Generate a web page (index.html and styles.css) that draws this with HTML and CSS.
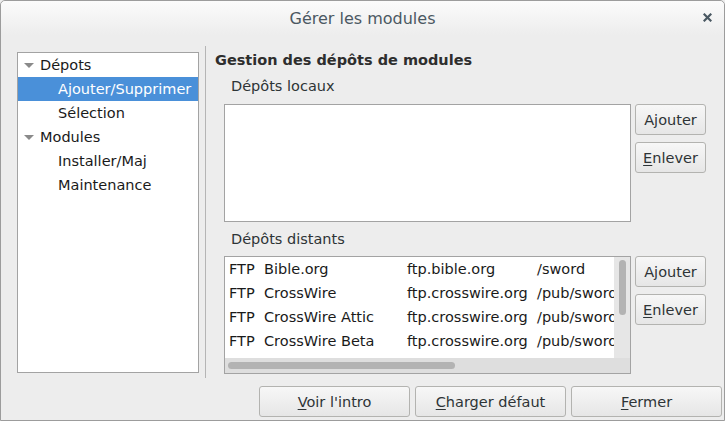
FILE: index.html
```html
<!DOCTYPE html>
<html lang="fr">
<head>
<meta charset="utf-8">
<title>Gérer les modules</title>
<link rel="stylesheet" href="styles.css">
</head>
<body>
<div class="window">
  <header class="titlebar">
    <span class="title">Gérer les modules</span>
    <span class="close" aria-label="Fermer">
      <svg width="9" height="9" viewBox="0 0 9 9"><path d="M1.5 1.5 L7.5 7.5 M7.5 1.5 L1.5 7.5" stroke="#4a5862" stroke-width="2.2" stroke-linecap="square"/></svg>
    </span>
  </header>
  <div class="main">
    <div class="tree">
      <div class="row parent"><span class="expander"></span>Dépots</div>
      <div class="row child selected">Ajouter/Supprimer</div>
      <div class="row child">Sélection</div>
      <div class="row parent"><span class="expander"></span>Modules</div>
      <div class="row child">Installer/Maj</div>
      <div class="row child">Maintenance</div>
    </div>
    <div class="separator"></div>
    <div class="panel">
      <h1 class="heading">Gestion des dépôts de modules</h1>
      <div class="label">Dépôts locaux</div>
      <div class="section">
        <div class="listbox"></div>
        <div class="side-buttons">
          <button class="btn small">Ajouter</button>
          <button class="btn small"><u>E</u>nlever</button>
        </div>
      </div>
      <div class="label second">Dépôts distants</div>
      <div class="section">
        <div class="listbox remote">
          <div class="rows">
            <div class="rrow"><span class="c1">FTP</span><span class="c2">Bible.org</span><span class="c3">ftp.bible.org</span><span class="c4">/sword</span></div>
            <div class="rrow"><span class="c1">FTP</span><span class="c2">CrossWire</span><span class="c3">ftp.crosswire.org</span><span class="c4">/pub/sword</span></div>
            <div class="rrow"><span class="c1">FTP</span><span class="c2">CrossWire Attic</span><span class="c3">ftp.crosswire.org</span><span class="c4">/pub/sword</span></div>
            <div class="rrow"><span class="c1">FTP</span><span class="c2">CrossWire Beta</span><span class="c3">ftp.crosswire.org</span><span class="c4">/pub/sword</span></div>
          </div>
          <div class="vscroll"><div class="vthumb"></div></div>
          <div class="hscroll"><div class="hthumb"></div></div>
        </div>
        <div class="side-buttons">
          <button class="btn small">Ajouter</button>
          <button class="btn small"><u>E</u>nlever</button>
        </div>
      </div>
    </div>
  </div>
  <div class="footer">
    <button class="btn wide"><u>V</u>oir l'intro</button>
    <button class="btn wide"><u>C</u>harger défaut</button>
    <button class="btn wide"><u>F</u>ermer</button>
  </div>
</div>
</body>
</html>
```

FILE: styles.css
```css
html, body {
  margin: 0;
  padding: 0;
  background: #ededed;
}
.window {
  width: 725px;
  height: 421px;
  box-sizing: border-box;
  border: 1px solid #9c9c9c;
  border-radius: 5px 5px 0 0;
  background: #ededed;
  font-family: "DejaVu Sans", sans-serif;
  font-size: 14.5px;
  color: #1a1a1a;
  overflow: hidden;
  display: flex;
  flex-direction: column;
}
.titlebar {
  height: 34px;
  flex: none;
  background: linear-gradient(#fbfbfb, #ededed);
  display: flex;
  align-items: center;
  justify-content: center;
  position: relative;
  border-radius: 4px 4px 0 0;
}
.title {
  font-size: 16px;
  color: #4b5862;
}
.close {
  position: absolute;
  right: 12px;
  top: 12px;
  width: 9px;
  height: 9px;
  display: flex;
}
.main {
  display: flex;
  padding: 11px 0 0 16px;
  height: 343px;
  box-sizing: border-box;
  flex: none;
}
.tree {
  margin-top: 6px;
  width: 182px;
  height: 321px;
  box-sizing: border-box;
  border: 1px solid #a3a3a3;
  background: #fff;
  flex: none;
}
.row {
  height: 24px;
  line-height: 24px;
  display: flex;
  align-items: center;
  white-space: nowrap;
}
.row.parent { padding-left: 5px; }
.row.child { padding-left: 40px; }
.row.selected { background: #4a90d9; color: #fff; }
.expander {
  width: 0;
  height: 0;
  border-left: 5px solid transparent;
  border-right: 5px solid transparent;
  border-top: 5px solid #8a8a8a;
  margin-right: 6px;
  margin-left: 1px;
}
.separator {
  width: 1px;
  height: 332px;
  background: #b5b5b5;
  margin-left: 6px;
  flex: none;
}
.panel {
  padding: 4px 0 0 9px;
  flex: 1;
  display: flex;
  flex-direction: column;
}
.heading {
  margin: 0;
  font-size: 14.5px;
  font-weight: bold;
  line-height: 20px;
  color: #2e2e2e;
}
.label {
  margin-top: 6px;
  padding-left: 16px;
  line-height: 20px;
  color: #2e3436;
}
.label.second { margin-top: 7px; }
.section {
  display: flex;
  margin-top: 8px;
  padding-left: 9px;
}
.label.second + .section { margin-top: 7px; }
.listbox {
  width: 407px;
  height: 118px;
  box-sizing: border-box;
  border: 1px solid #a3a3a3;
  background: #fff;
  flex: none;
}
.side-buttons {
  display: flex;
  flex-direction: column;
  gap: 7px;
  margin-left: 4px;
}
.btn {
  font-family: "DejaVu Sans", sans-serif;
  font-size: 14.5px;
  color: #2e3436;
  background: linear-gradient(#f7f7f7, #e6e6e6);
  border: 1px solid #b3b3b0;
  border-radius: 3px;
  padding: 0;
  box-sizing: border-box;
  height: 31px;
}
.btn.small { width: 71px; }
.btn.wide { width: 151px; }
.btn u { text-underline-offset: 2px; }
.remote {
  display: grid;
  grid-template-columns: 1fr 16px;
  grid-template-rows: 1fr 15px;
  overflow: hidden;
}
.rows {
  overflow: hidden;
  padding-left: 4px;
}
.rrow {
  height: 24px;
  line-height: 24px;
  display: flex;
  white-space: nowrap;
  color: #1a1a1a;
}
.c1 { width: 35px; flex: none; }
.c2 { width: 143px; flex: none; }
.c3 { width: 130px; flex: none; }
.c4 { flex: none; }
.vscroll {
  background: #e6e6e6;
  display: flex;
  justify-content: center;
  padding-top: 3px;
}
.vthumb {
  width: 7px;
  height: 55px;
  border-radius: 4px;
  background: #b3b3b3;
}
.hscroll {
  grid-column: 1 / 3;
  background: #dedede;
  padding: 4px 0 0 3px;
}
.hthumb {
  width: 227px;
  height: 7px;
  border-radius: 4px;
  background: #b3b3b3;
}
.footer {
  display: flex;
  justify-content: flex-end;
  gap: 5px;
  padding: 8px 2px 0 0;
}
```
